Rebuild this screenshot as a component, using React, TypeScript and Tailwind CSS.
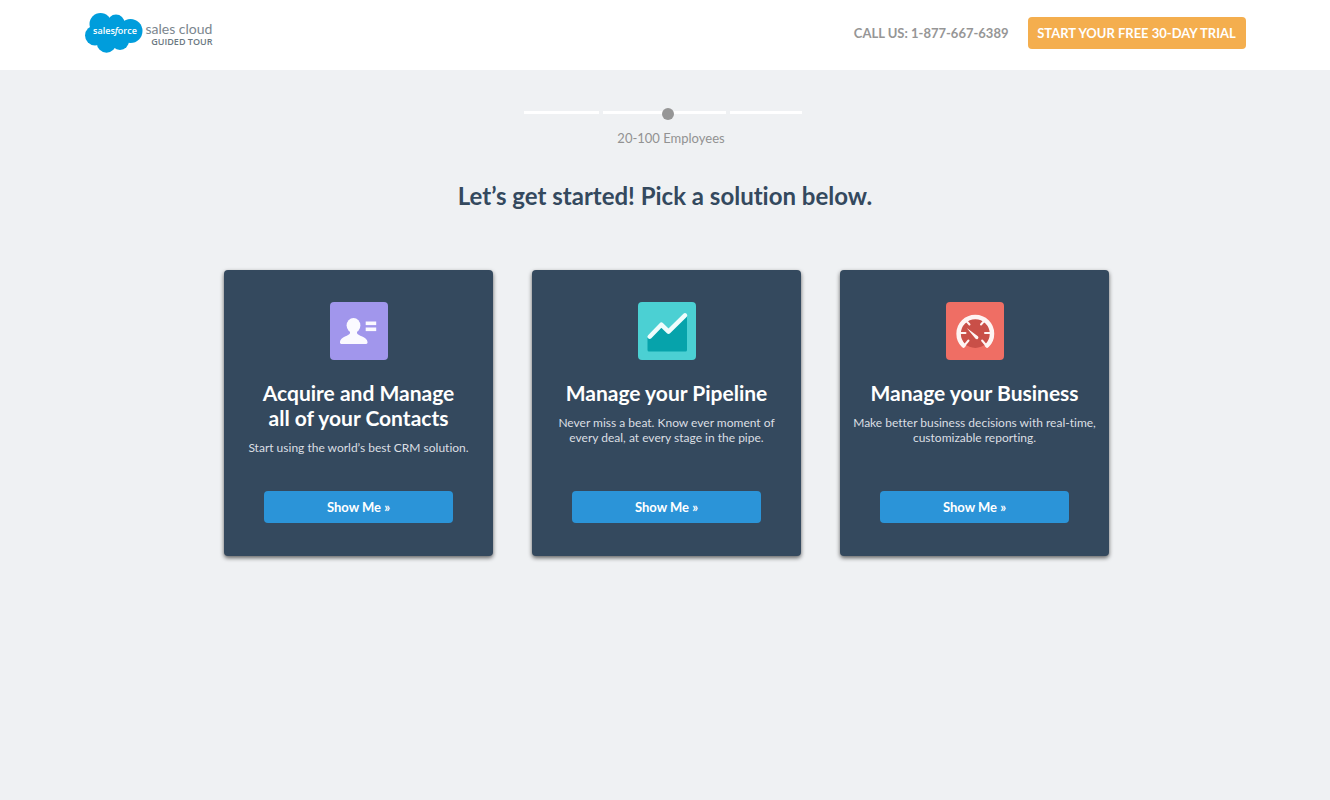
import { useState } from 'react';
import type { ReactNode } from 'react';

type Solution = {
  id: string;
  title: ReactNode;
  text: string;
  icon: ReactNode;
};

const SIZES = ['1-20 Employees', '20-100 Employees', '100+ Employees'];

const getSizeLabel = (value: number) => {
  if (value < 28) return SIZES[0];
  if (value < 73) return SIZES[1];
  return SIZES[2];
};

function Logo() {
  return (
    <a href="#" className="flex items-center gap-[3px]" aria-label="salesforce sales cloud guided tour">
      <svg viewBox="0 0 58 40" className="h-10 w-[58px]">
        <g fill="#009ddc">
          <circle cx="15.5" cy="11" r="11" />
          <circle cx="31" cy="10" r="8.5" />
          <circle cx="45.5" cy="18" r="12" />
          <circle cx="10" cy="22.5" r="10" />
          <circle cx="21.5" cy="30" r="9.7" />
          <circle cx="35" cy="28" r="9" />
          <rect x="14" y="10" width="30" height="18" />
        </g>
        <text x="30" y="21" textAnchor="middle" fill="#fff" fontSize="9" fontWeight="600" fontFamily="'Open Sans', sans-serif">
          sales<tspan fontStyle="italic">f</tspan>orce
        </text>
      </svg>
      <span className="flex flex-col items-end pt-1">
        <span className="text-[14px] leading-[14px] text-[#7b868e]">sales cloud</span>
        <span className="font-['Open_Sans',sans-serif] text-[9px] leading-3 font-semibold text-[#6b7882]">GUIDED TOUR</span>
      </span>
    </a>
  );
}

function ContactsIcon() {
  return (
    <svg viewBox="0 0 58 58" className="size-[58px] rounded bg-[#a196ec]">
      <g fill="#fbfaff">
        <ellipse cx="23.5" cy="23.5" rx="6.9" ry="7.5" />
        <path d="M20 28h7v3c0 2.500 10.500 4 10.500 9v.6c0 .8-.5 1.400-1.300 1.400H11.300c-.8 0-1.300-.6-1.300-1.400V40c0-5 10-6.500 10-9z" />
        <rect x="35.700" y="19.500" width="10.500" height="3.600" />
        <rect x="35.700" y="25.500" width="10.500" height="3.600" />
      </g>
    </svg>
  );
}

function PipelineIcon() {
  return (
    <svg viewBox="0 0 58 58" className="size-[58px] rounded bg-[#4bd0d3]">
      <path d="M9.500 36l13.800-12 7.200 7L47 14.500h2v33.500q0 1.500-1.500 1.500H11q-1.500 0-1.500-1.500z" fill="#06a3ab" />
      <path d="M11.700 34.700L23.300 22.700l7.200 7L47 13.300" fill="none" stroke="#effcfc" strokeWidth="4.500" strokeLinecap="round" strokeLinejoin="round" />
    </svg>
  );
}

function BusinessIcon() {
  return (
    <svg viewBox="0 0 58 58" className="size-[58px] rounded bg-[#ef6e64]">
      <circle cx="29.300" cy="31" r="15" fill="#c94f48" />
      <path d="M17.500 43.500a16.700 16.700 0 1 1 23.600 0" fill="none" stroke="#fef4f3" strokeWidth="4.500" strokeLinecap="round" />
      <g stroke="#fef4f3" strokeWidth="2" strokeLinecap="round">
        <path d="M14 31h5.500M39 31h5.500M19.500 18l4 4.500M39 18l-4 4.500" />
        <path d="M17.500 44.500l5-6M41.100 44.500l-5-6" />
      </g>
      <path d="M20.700 26l11.200 8.300a1.700 1.700 0 0 1-2.300 2.500z" fill="#fef4f3" />
    </svg>
  );
}

const SOLUTIONS: Solution[] = [
  {
    id: 'contacts',
    title: <>Acquire and Manage<br />all of your Contacts</>,
    text: 'Start using the world’s best CRM solution.',
    icon: <ContactsIcon />,
  },
  {
    id: 'pipeline',
    title: 'Manage your Pipeline',
    text: 'Never miss a beat. Know ever moment of every deal, at every stage in the pipe.',
    icon: <PipelineIcon />,
  },
  {
    id: 'business',
    title: 'Manage your Business',
    text: 'Make better business decisions with real-time, customizable reporting.',
    icon: <BusinessIcon />,
  },
];

function SizeSlider() {
  const [value, setValue] = useState(52);

  return (
    <div className="mx-auto w-[282px] pr-1">
      <div className="relative flex h-3 gap-1 pt-[3px]">
        <span className="h-[3px] w-[75px] bg-white" />
        <span className="h-[3px] flex-1 bg-white" />
        <span className="h-[3px] w-[72px] bg-white" />
        <input
          id="company-size"
          type="range"
          min={0}
          max={100}
          value={value}
          onChange={(e) => setValue(Number(e.target.value))}
          className="absolute inset-0 h-3 w-full cursor-pointer appearance-none bg-transparent [&::-webkit-slider-thumb]:size-3 [&::-webkit-slider-thumb]:appearance-none [&::-webkit-slider-thumb]:rounded-full [&::-webkit-slider-thumb]:bg-[#969696]"
        />
      </div>
      <label htmlFor="company-size" className="mt-2 block pl-4 text-center text-[13px] leading-5 text-[#929292]">
        {getSizeLabel(value)}
      </label>
    </div>
  );
}

function SolutionCard({ solution }: { solution: Solution }) {
  return (
    <article className="flex min-h-[286px] flex-col items-center rounded bg-[#34495e] px-3 pt-8 pb-[33px] text-center shadow-[0_2px_4px_rgba(0,0,0,0.6)]">
      {solution.icon}
      <h2 className="mt-5 text-[21px] leading-[25px] font-bold text-white">{solution.title}</h2>
      <p className="mt-[10px] mb-4 text-[12px] leading-[15px] text-[#dbdfe3]">{solution.text}</p>
      <button type="button" className="mt-auto h-8 w-[189px] rounded bg-[#2b94d8] pt-0.5 text-[13px] font-bold text-white hover:bg-[#2585c4]">
        Show Me »
      </button>
    </article>
  );
}

export default function App() {
  return (
    <div className="min-h-screen bg-[#eff1f3] font-['Lato',sans-serif] [font-variant-ligatures:none]">
      <header className="bg-white">
        <div className="mx-auto flex min-h-[70px] max-w-[1161px] items-center justify-between pb-1">
          <Logo />
          <div className="flex items-center gap-[19px]">
            <a href="tel:1-877-667-6389" className="pt-0.5 text-[13px] font-bold text-[#969696]">CALL US: 1-877-667-6389</a>
            <a href="#" className="flex h-8 w-[218px] items-center justify-center rounded bg-[#f4ae4e] pt-0.5 text-[13px] font-bold text-white">
              START YOUR FREE 30-DAY TRIAL
            </a>
          </div>
        </div>
      </header>

      <main className="px-4 pt-[38px] pb-10">
        <SizeSlider />
        <h1 className="mt-8 text-center text-[24px] leading-8 font-bold text-[#34495e]">
          Let’s get started! Pick a solution below.
        </h1>
        <section className="mx-auto mt-[58px] grid max-w-[888px] grid-cols-1 gap-[39px] pl-[3px] md:grid-cols-3">
          {SOLUTIONS.map((s) => (
            <SolutionCard key={s.id} solution={s} />
          ))}
        </section>
      </main>
    </div>
  );
}
